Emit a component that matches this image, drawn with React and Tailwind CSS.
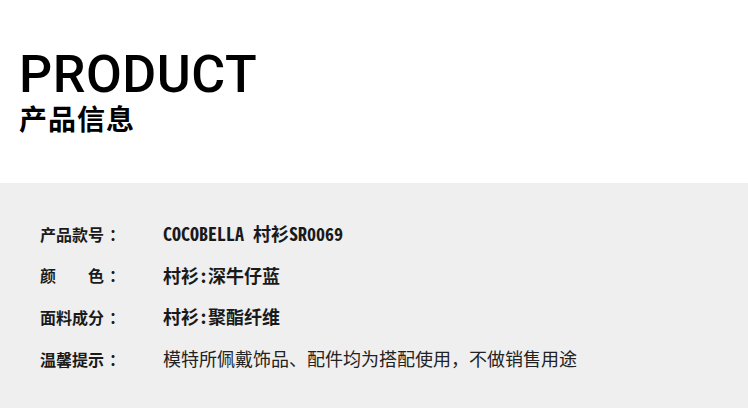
import React from "react";

const cjk = "font-['Noto_Sans_CJK_SC',sans-serif]";

const rows = [
  { label: ["产品款号"], value: "COCOBELLA 村衫SR0069", bold: true },
  { label: ["颜", "色"], value: "村衫:深牛仔蓝", bold: true },
  { label: ["面料成分"], value: "村衫:聚酯纤维", bold: true },
  { label: ["温馨提示"], value: "模特所佩戴饰品、配件均为搭配使用，不做销售用途", bold: false },
];

const App = () => {
  return (
    <div className="w-[748px] h-[408px] flex flex-col bg-white overflow-hidden">
      {/* Title */}
      <div className="h-[183px] pl-[19px] pt-[49px]">
        <h1 className="font-['Roboto',sans-serif] font-medium text-[52px] leading-[52px] tracking-[0.5px] text-black">
          PRODUCT
        </h1>
        <h2 className={`${cjk} font-bold text-[28px] leading-[28px] tracking-[1px] text-black mt-[3px]`}>
          产品信息
        </h2>
      </div>

      {/* Details */}
      <div className="flex-1 bg-[#efefef] pl-[40px] pt-[42px] flex flex-col gap-[24.7px]">
        {rows.map((row) => (
          <div key={row.label.join("")} className="flex items-center h-[17px]">
            <div className={`${cjk} font-bold text-[16px] text-[#1a1a1a] w-[123px] flex`}>
              <span className="w-[64px] flex justify-between">
                {row.label.map((c) => (
                  <span key={c}>{c}</span>
                ))}
              </span>
              <span className="pl-[5px]">：</span>
            </div>
            <div
              className={
                row.bold
                  ? `${cjk} font-bold text-[18px] text-[#1a1a1a] [font-feature-settings:'hwid']`
                  : `${cjk} text-[18px] text-[#222]`
              }
            >
              {row.value}
            </div>
          </div>
        ))}
      </div>
    </div>
  );
};

export default App;
